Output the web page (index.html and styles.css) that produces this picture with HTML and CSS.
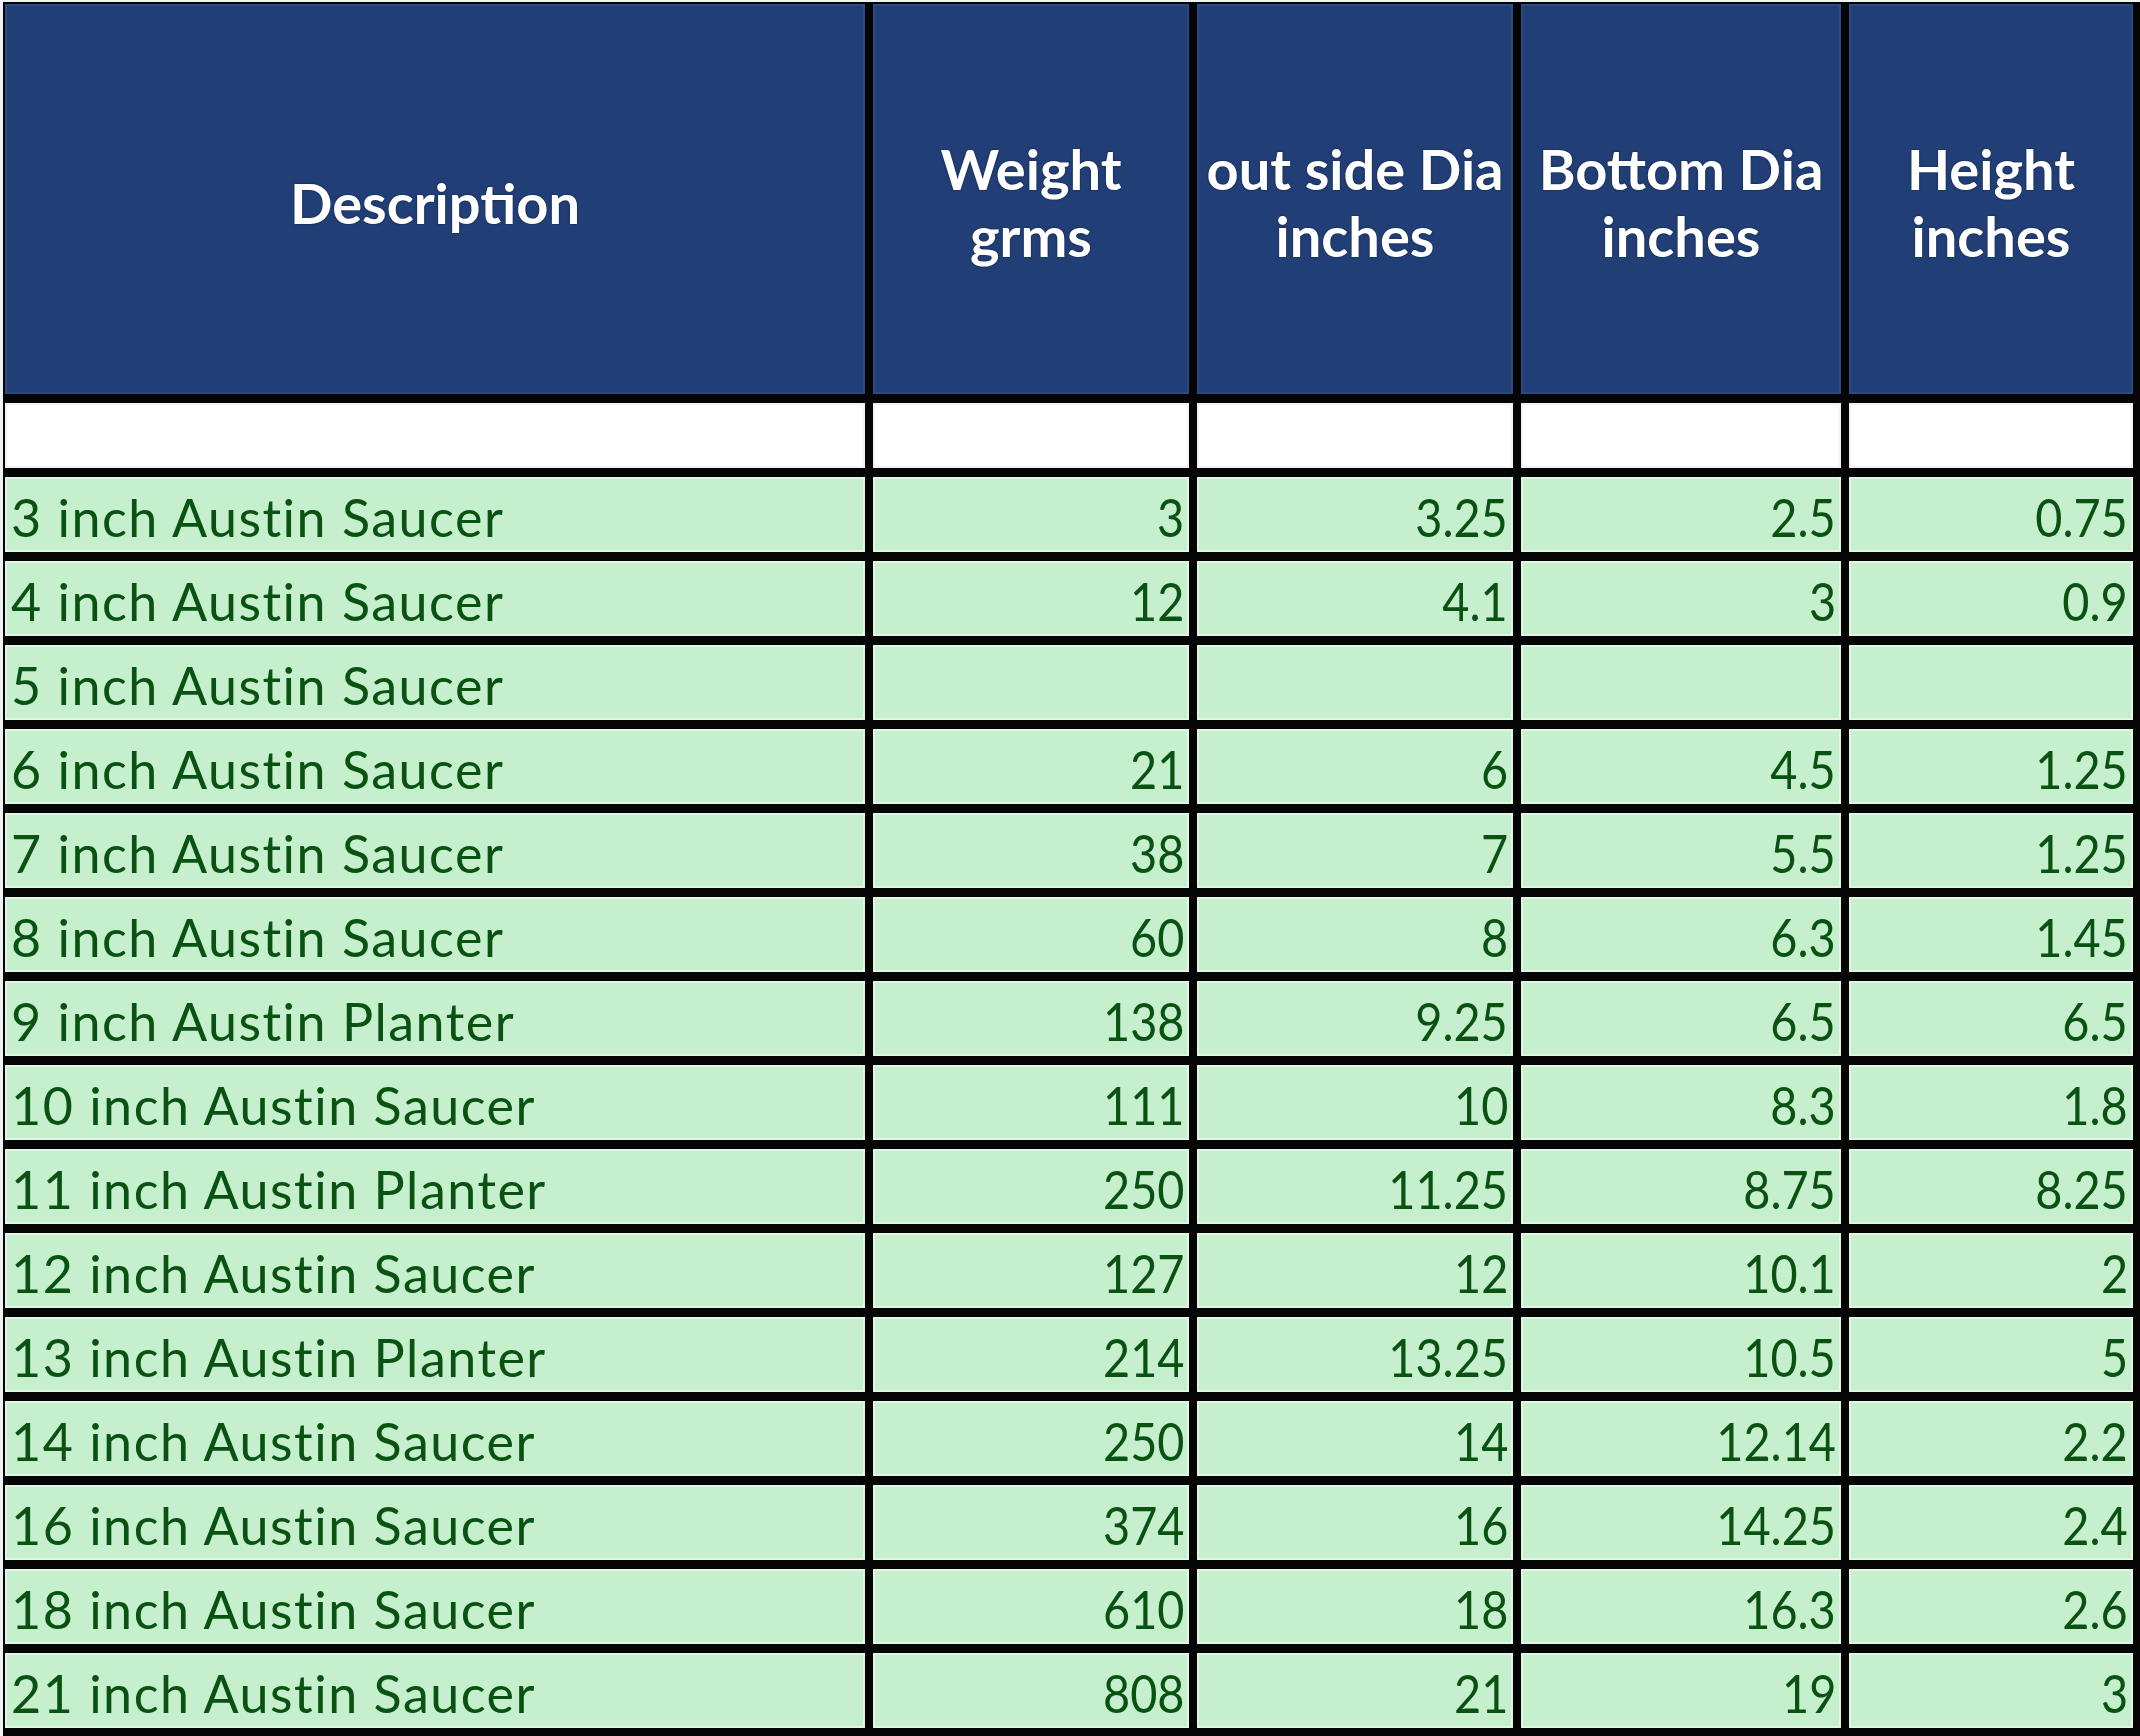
FILE: index.html
```html
<!DOCTYPE html>
<html lang="en">
<head>
<meta charset="utf-8">
<title>Austin Saucer dimensions</title>
<link rel="stylesheet" href="styles.css">
</head>
<body>
<div class="sheet">
  <div class="hd"><span>Description</span></div>
  <div class="hd"><span>Weight<br>grms</span></div>
  <div class="hd"><span>out side Dia<br>inches</span></div>
  <div class="hd"><span>Bottom Dia<br>inches</span></div>
  <div class="hd"><span>Height<br>inches</span></div>

  <div class="blank"></div><div class="blank"></div><div class="blank"></div><div class="blank"></div><div class="blank"></div>

  <div class="c t">3 inch Austin Saucer</div><div class="c n"><span>3</span></div><div class="c n"><span>3.25</span></div><div class="c n"><span>2.5</span></div><div class="c n"><span>0.75</span></div>
  <div class="c t">4 inch Austin Saucer</div><div class="c n"><span>12</span></div><div class="c n"><span>4.1</span></div><div class="c n"><span>3</span></div><div class="c n"><span>0.9</span></div>
  <div class="c t">5 inch Austin Saucer</div><div class="c n"></div><div class="c n"></div><div class="c n"></div><div class="c n"></div>
  <div class="c t">6 inch Austin Saucer</div><div class="c n"><span>21</span></div><div class="c n"><span>6</span></div><div class="c n"><span>4.5</span></div><div class="c n"><span>1.25</span></div>
  <div class="c t">7 inch Austin Saucer</div><div class="c n"><span>38</span></div><div class="c n"><span>7</span></div><div class="c n"><span>5.5</span></div><div class="c n"><span>1.25</span></div>
  <div class="c t">8 inch Austin Saucer</div><div class="c n"><span>60</span></div><div class="c n"><span>8</span></div><div class="c n"><span>6.3</span></div><div class="c n"><span>1.45</span></div>
  <div class="c t">9 inch Austin Planter</div><div class="c n"><span>138</span></div><div class="c n"><span>9.25</span></div><div class="c n"><span>6.5</span></div><div class="c n"><span>6.5</span></div>
  <div class="c t">10 inch Austin Saucer</div><div class="c n"><span>111</span></div><div class="c n"><span>10</span></div><div class="c n"><span>8.3</span></div><div class="c n"><span>1.8</span></div>
  <div class="c t">11 inch Austin Planter</div><div class="c n"><span>250</span></div><div class="c n"><span>11.25</span></div><div class="c n"><span>8.75</span></div><div class="c n"><span>8.25</span></div>
  <div class="c t">12 inch Austin Saucer</div><div class="c n"><span>127</span></div><div class="c n"><span>12</span></div><div class="c n"><span>10.1</span></div><div class="c n"><span>2</span></div>
  <div class="c t">13 inch Austin Planter</div><div class="c n"><span>214</span></div><div class="c n"><span>13.25</span></div><div class="c n"><span>10.5</span></div><div class="c n"><span>5</span></div>
  <div class="c t">14 inch Austin Saucer</div><div class="c n"><span>250</span></div><div class="c n"><span>14</span></div><div class="c n"><span>12.14</span></div><div class="c n"><span>2.2</span></div>
  <div class="c t">16 inch Austin Saucer</div><div class="c n"><span>374</span></div><div class="c n"><span>16</span></div><div class="c n"><span>14.25</span></div><div class="c n"><span>2.4</span></div>
  <div class="c t">18 inch Austin Saucer</div><div class="c n"><span>610</span></div><div class="c n"><span>18</span></div><div class="c n"><span>16.3</span></div><div class="c n"><span>2.6</span></div>
  <div class="c t">21 inch Austin Saucer</div><div class="c n"><span>808</span></div><div class="c n"><span>21</span></div><div class="c n"><span>19</span></div><div class="c n"><span>3</span></div>
</div>
</body>
</html>
```

FILE: styles.css
```css
html, body {
  margin: 0;
  padding: 0;
  background: #eef2f4;
}
body {
  width: 2140px;
  height: 1736px;
  overflow: hidden;
}
.sheet {
  margin: 2px 0 0 3px;
  padding: 2px 7px 9px 2px;
  background: #050505;
  display: grid;
  grid-template-columns: 860px 316px 316px 320px 284px;
  grid-template-rows: 390px 65px repeat(15, 75px);
  column-gap: 8px;
  row-gap: 9px;
}
.hd {
  background: #213f76;
  box-shadow: inset 0 0 0 2px #2a4a82;
  color: #ffffff;
  font-family: Lato, "Open Sans", sans-serif;
  font-weight: 700;
  font-size: 56px;
  line-height: 67px;
  text-align: center;
  display: flex;
  align-items: center;
  justify-content: center;
  padding-top: 6px;
  box-sizing: border-box;
  white-space: nowrap;
  text-shadow: 0 0 2px #0a1a3a;
}
.blank {
  background: #ffffff;
  box-shadow: inset 0 0 0 2px #f2f2f2;
}
.c {
  background: #c6efce;
  box-shadow: inset 0 0 0 2px #e3f6e6;
  color: #0a5212;
  font-family: Lato, "Open Sans", sans-serif;
  font-size: 52px;
  display: flex;
  align-items: center;
  padding-top: 4px;
  white-space: nowrap;
  box-sizing: border-box;
}
.t {
  padding-left: 6px;
  letter-spacing: 1.5px;
}
.n {
  justify-content: flex-end;
  padding-right: 5px;
}
.n span {
  display: inline-block;
  transform: scaleX(0.9);
  transform-origin: right center;
}
```
